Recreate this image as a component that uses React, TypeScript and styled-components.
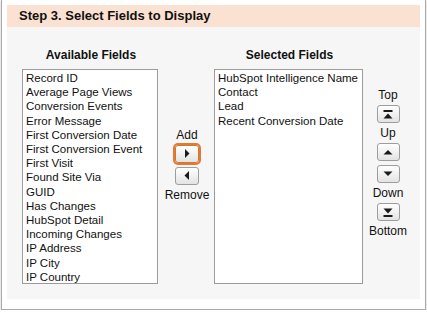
import React from "react";
import styled, { createGlobalStyle, css } from "styled-components";

const Global = createGlobalStyle`
  html, body { margin: 0; padding: 0; background: #ffffff; }
  body { font-family: "Liberation Sans", Arial, Helvetica, sans-serif; color: #111; }
`;

const Card = styled.div`
  box-sizing: border-box;
  width: 425px;
  height: 310px;
  margin-left: 1px;
  padding: 5px 5px 10px 5px;
  background: #fff;
  border: 1px solid #a9a9a9;
  border-top: none;
  box-shadow: 0 1px 2px rgba(0, 0, 0, 0.25);
`;

const Panel = styled.div`
  display: flex;
  flex-direction: column;
  height: 294px;
`;

const Header = styled.div`
  height: 22px;
  line-height: 22px;
  padding-left: 12px;
  background: #fbe1d2;
  font-size: 13px;
  font-weight: bold;
  color: #111;
`;

const Body = styled.div`
  flex: 1;
  background: #f6f6f6;
  padding: 20px 0 0 15px;
  display: flex;
  align-items: center;
  align-self: stretch;
`;

const Row = styled.div`
  display: flex;
  align-items: center;
  align-self: flex-start;
`;

const ListColumn = styled.div`
  display: flex;
  flex-direction: column;
  width: ${(p) => p.$width}px;
`;

const ColumnTitle = styled.div`
  font-size: 12px;
  font-weight: bold;
  line-height: 16px;
  text-align: center;
  margin-bottom: 6px;
  padding-left: 2px;
`;

const ListBox = styled.ul`
  box-sizing: border-box;
  margin: 0;
  padding: 1px 3px;
  list-style: none;
  height: 215px;
  background: #fff;
  border: 1px solid #9c9c9c;
  overflow: hidden;
`;

const ListItem = styled.li`
  font-size: 11.5px;
  line-height: 14.2px;
  white-space: nowrap;
  color: #111;
`;

const ControlColumn = styled.div`
  display: flex;
  flex-direction: column;
  align-items: center;
  width: ${(p) => p.$width}px;
  padding-left: ${(p) => p.$shift || 0}px;
  margin-bottom: ${(p) => p.$lift || 0}px;
  box-sizing: border-box;
`;

const Label = styled.div`
  font-size: 12px;
  line-height: 16px;
  color: #111;
`;

const focusRing = css`
  border-color: #d9742f;
  box-shadow: 0 0 0 2px #e07b35;
`;

const ArrowButton = styled.button`
  box-sizing: border-box;
  width: ${(p) => p.$width}px;
  height: 18px;
  margin: 2px 0;
  padding: 0;
  display: flex;
  align-items: center;
  justify-content: center;
  border: 1px solid #9d9d9d;
  border-radius: 3px;
  background: linear-gradient(#ffffff, #e3e3e3);
  cursor: pointer;
  ${(p) => p.$focused && focusRing}
`;

type IconKind = "right" | "left" | "top" | "up" | "down" | "bottom";

function Glyph({ kind }: { kind: IconKind }) {
  const fill = "#1a1a1a";
  if (kind === "right")
    return (
      <svg width="6" height="9" viewBox="0 0 6 9">
        <polygon points="1,0 5.5,4.5 1,9" fill={fill} />
      </svg>
    );
  if (kind === "left")
    return (
      <svg width="6" height="9" viewBox="0 0 6 9">
        <polygon points="5,0 0.5,4.5 5,9" fill={fill} />
      </svg>
    );
  if (kind === "up")
    return (
      <svg width="10" height="6" viewBox="0 0 10 6">
        <polygon points="0.5,5.5 5,1 9.5,5.5" fill={fill} />
      </svg>
    );
  if (kind === "down")
    return (
      <svg width="10" height="6" viewBox="0 0 10 6">
        <polygon points="0.5,0.5 5,5 9.5,0.5" fill={fill} />
      </svg>
    );
  if (kind === "top")
    return (
      <svg width="10" height="9" viewBox="0 0 10 9">
        <rect x="0.5" y="0" width="9" height="2" fill={fill} />
        <polygon points="0.5,8.5 5,3.5 9.5,8.5" fill={fill} />
      </svg>
    );
  return (
    <svg width="10" height="9" viewBox="0 0 10 9">
      <polygon points="0.5,0.5 5,5.5 9.5,0.5" fill={fill} />
      <rect x="0.5" y="7" width="9" height="2" fill={fill} />
    </svg>
  );
}

const available = [
  "Record ID",
  "Average Page Views",
  "Conversion Events",
  "Error Message",
  "First Conversion Date",
  "First Conversion Event",
  "First Visit",
  "Found Site Via",
  "GUID",
  "Has Changes",
  "HubSpot Detail",
  "Incoming Changes",
  "IP Address",
  "IP City",
  "IP Country",
];

const selected = [
  "HubSpot Intelligence Name",
  "Contact",
  "Lead",
  "Recent Conversion Date",
];

export default function App() {
  return (
    <>
      <Global />
      <Card>
        <Panel>
          <Header>Step 3. Select Fields to Display</Header>
          <Body>
            <Row>
              <ListColumn $width={136}>
                <ColumnTitle>Available Fields</ColumnTitle>
                <ListBox>
                  {available.map((f) => (
                    <ListItem key={f}>{f}</ListItem>
                  ))}
                </ListBox>
              </ListColumn>
              <ControlColumn $width={56} $shift={2} $lift={2}>
                <Label>Add</Label>
                <ArrowButton $width={24} $focused>
                  <Glyph kind="right" />
                </ArrowButton>
                <ArrowButton $width={24}>
                  <Glyph kind="left" />
                </ArrowButton>
                <Label>Remove</Label>
              </ControlColumn>
              <ListColumn $width={149}>
                <ColumnTitle>Selected Fields</ColumnTitle>
                <ListBox>
                  {selected.map((f) => (
                    <ListItem key={f}>{f}</ListItem>
                  ))}
                </ListBox>
              </ListColumn>
              <ControlColumn $width={50} $lift={5}>
                <Label>Top</Label>
                <ArrowButton $width={23}>
                  <Glyph kind="top" />
                </ArrowButton>
                <Label>Up</Label>
                <ArrowButton $width={23}>
                  <Glyph kind="up" />
                </ArrowButton>
                <ArrowButton $width={23}>
                  <Glyph kind="down" />
                </ArrowButton>
                <Label>Down</Label>
                <ArrowButton $width={23}>
                  <Glyph kind="bottom" />
                </ArrowButton>
                <Label>Bottom</Label>
              </ControlColumn>
            </Row>
          </Body>
        </Panel>
      </Card>
    </>
  );
}
